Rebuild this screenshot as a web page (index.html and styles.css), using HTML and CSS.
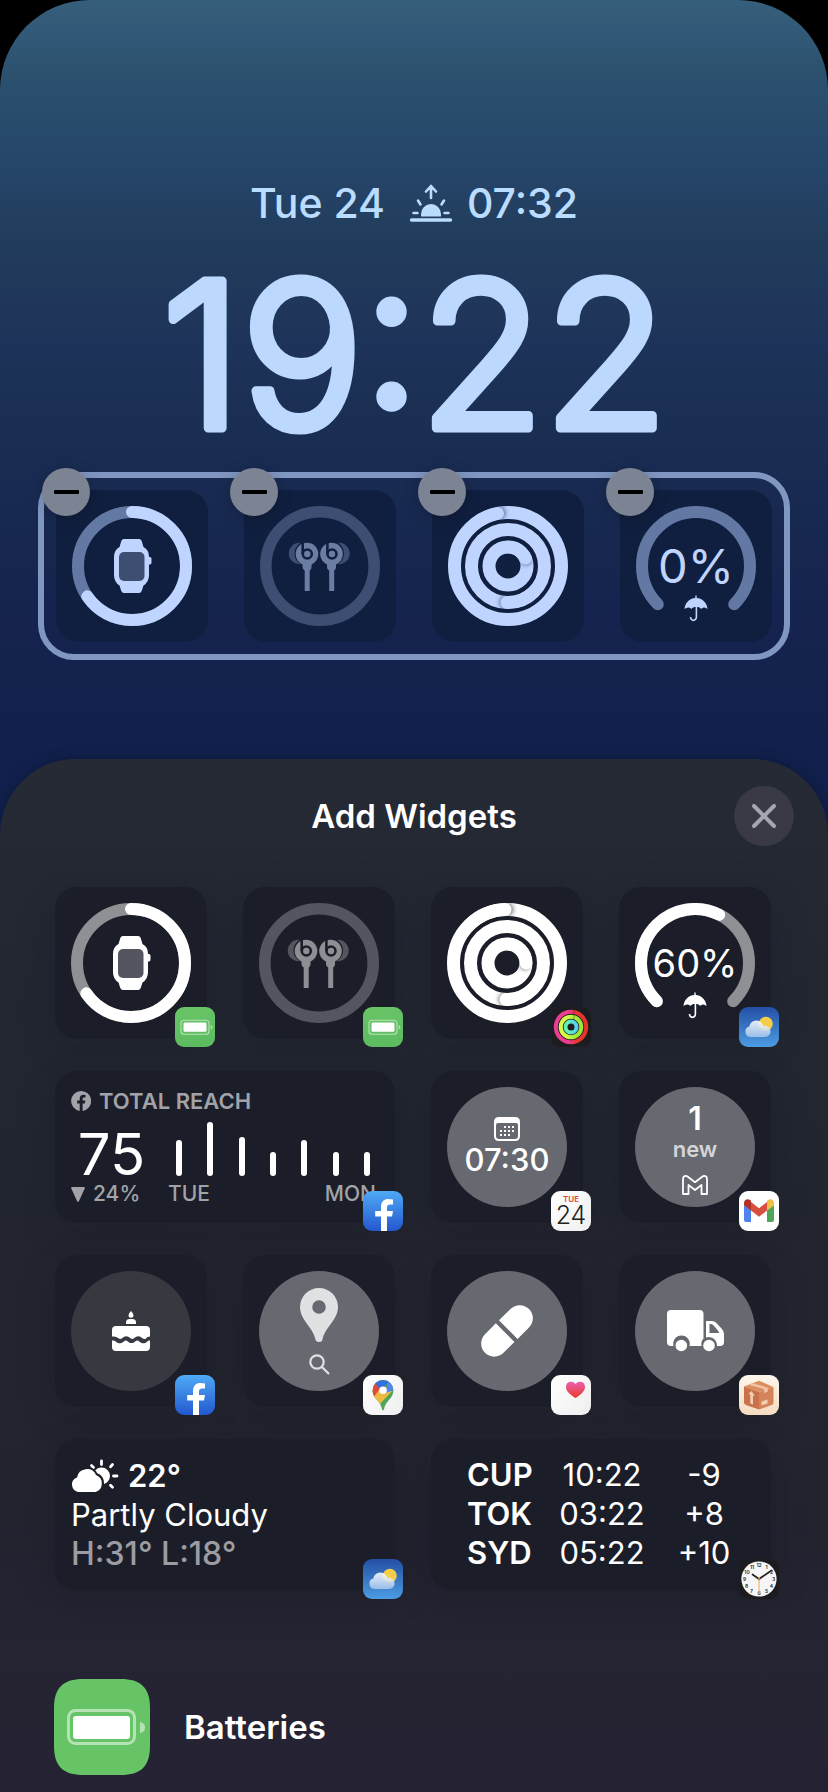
FILE: index.html
```html
<!DOCTYPE html>
<html lang="en">
<head>
<meta charset="utf-8">
<meta name="viewport" content="width=device-width, initial-scale=1">
<title>Add Widgets</title>
<link rel="stylesheet" href="styles.css">
</head>
<body>
<svg class="defs" aria-hidden="true">
  <defs>
    <linearGradient id="g-green" x1="0" y1="0" x2="0" y2="1"><stop offset="0" stop-color="#68c567"/><stop offset="1" stop-color="#5dbb60"/></linearGradient>
    <linearGradient id="g-sky" x1="0" y1="0" x2="0" y2="1"><stop offset="0" stop-color="#2450a6"/><stop offset="1" stop-color="#4c9ce2"/></linearGradient>
    <linearGradient id="g-cloud" x1="0" y1="0" x2="0" y2="1"><stop offset="0" stop-color="#ffffff"/><stop offset="1" stop-color="#a5c6ec"/></linearGradient>
    <linearGradient id="g-fb" x1="0" y1="0" x2="0" y2="1"><stop offset="0" stop-color="#4faaf6"/><stop offset="1" stop-color="#2458cf"/></linearGradient>
    <linearGradient id="g-heart" x1="0" y1="0" x2="0" y2="1"><stop offset="0" stop-color="#ea5fae"/><stop offset="1" stop-color="#ea3a27"/></linearGradient>
    <linearGradient id="g-box" x1="0" y1="0" x2="0" y2="1"><stop offset="0" stop-color="#fdf6ec"/><stop offset="1" stop-color="#f5dcc0"/></linearGradient>
    <linearGradient id="g-white" x1="0" y1="0" x2="1" y2="1"><stop offset="0" stop-color="#ffffff"/><stop offset="1" stop-color="#efefef"/></linearGradient>
    <linearGradient id="g-move" x1="0" y1="0" x2="1" y2="0"><stop offset="0.4" stop-color="#ec3d93"/><stop offset="0.7" stop-color="#e8342f"/></linearGradient>
    <linearGradient id="g-exercise" x1="0" y1="0" x2="1" y2="0"><stop offset="0.3" stop-color="#d6f94a"/><stop offset="0.8" stop-color="#9be934"/></linearGradient>
    <linearGradient id="g-stand" x1="0" y1="0" x2="1" y2="0"><stop offset="0.3" stop-color="#62f0b4"/><stop offset="0.8" stop-color="#5cd3ee"/></linearGradient>
    <filter id="soft" x="-1" y="-1" width="3" height="3"><feGaussianBlur stdDeviation="2"/></filter>
    <mask id="m-rings" maskUnits="userSpaceOnUse" x="0" y="0" width="120" height="120">
      <g fill="none" stroke="#fff" stroke-width="13"><circle cx="60" cy="60" r="53.5"/><circle cx="60" cy="60" r="36.5"/><circle cx="60" cy="60" r="19"/></g>
    </mask>
    <mask id="m-buds" maskUnits="userSpaceOnUse" x="0" y="0" width="120" height="120">
      <path fill="#fff" d="M0 0h120v120H0z"/><circle cx="47" cy="47.5" r="12.5"/><circle cx="71.5" cy="47.5" r="12.5"/>
    </mask>
    <mask id="m-b" maskUnits="userSpaceOnUse" x="0" y="0" width="120" height="120">
      <path fill="#fff" d="M0 0h120v120H0z"/>
      <g fill="none" stroke="#000" stroke-width="2.6"><circle cx="47.3" cy="48" r="4.5"/><circle cx="72" cy="48" r="4.5"/><path d="M42.7 35v13M67.4 35v13"/></g>
    </mask>
    <mask id="m-sun" maskUnits="userSpaceOnUse" x="0" y="0" width="48" height="34">
      <path fill="#fff" d="M0 0h48v34H0z"/>
      <path stroke="#000" stroke-width="4" d="M8 33a7.5 7.5 0 0 1-2-15 10 10 0 0 1 19-2 9 9 0 0 1 0 17z"/>
    </mask>
    <clipPath id="c-pin"><path d="M20 4.9a10.3 10.3 0 0 0-10.4 10.3c0 8.8 8.2 10.5 9.3 18.8q.2 1.2 1.1 1.2t1.1-1.2c1.1-8.3 9.3-10 9.3-18.8A10.3 10.3 0 0 0 20 4.9z"/></clipPath>
  </defs>

  <symbol id="watch" viewBox="0 0 120 120">
    <g fill="none" stroke-width="12">
      <circle cx="60" cy="60" r="54" stroke="var(--mid)"/>
      <circle cx="60" cy="60" r="54" stroke="var(--fg)" stroke-linecap="round" pathLength="100" stroke-dasharray="65.5 100" transform="rotate(-90 60 60)"/>
    </g>
    <path fill="var(--fg)" d="M52 33h15q2 0 2.7 2l1.8 6q5.5 3 5.5 9.5v.5h1q1.5 0 1.5 2v3.5q0 2-1.5 2h-1V69q0 7-5.5 10.5l-1.8 5.5q-.7 2-2.7 2H52q-2 0-2.7-2L47.500 79.500Q42 76 42 69V51q0-7 5.500-10l1.800-6q.7-2 2.700-2z"/>
    <rect x="47" y="46" width="25.5" height="29" rx="5" fill="var(--dim)"/>
  </symbol>
  <symbol id="buds" viewBox="0 0 120 120">
    <circle cx="60" cy="60" r="54.2" fill="none" stroke="var(--dim)" stroke-width="11.6"/>
    <g fill="var(--dim)" mask="url(#m-buds)"><circle cx="39.5" cy="47.5" r="10.7"/><circle cx="79" cy="47.5" r="10.7"/></g>
    <g fill="var(--bud)" mask="url(#m-b)"><circle cx="47" cy="48" r="11.3"/><circle cx="71.5" cy="48" r="11.3"/><path d="M42.500 56h9v5q0 3-1.800 3.500V85h-5V64.500q-2.200-.5-2.200-3.500zM67 56h9v5q0 3-1.800 3.500V85h-5V64.500Q67 64 67 61z"/></g>
  </symbol>
  <symbol id="rings-a" viewBox="0 0 120 120">
    <g fill="none" stroke="var(--fg)" stroke-width="13"><circle cx="60" cy="60" r="53.5"/><circle cx="60" cy="60" r="36.5"/><circle cx="60" cy="60" r="19"/></g>
    <g mask="url(#m-rings)">
      <g fill="var(--shade)" filter="url(#soft)"><circle cx="51" cy="7" r="6.5"/><circle cx="58" cy="96.5" r="6.5"/><circle cx="78" cy="53.5" r="5.5"/></g>
      <g fill="none" stroke="var(--fg)" stroke-width="13" stroke-linecap="round"><path d="M22.200 22.200A53.500 53.500 0 0 1 49.500 7.500M85.800 85.800A36.500 36.500 0 0 1 59 96.500M60 41A19 19 0 0 1 77.500 52"/></g>
    </g>
  </symbol>
  <symbol id="rings-b" viewBox="0 0 120 120">
    <g fill="none" stroke="var(--fg)" stroke-width="13"><circle cx="60" cy="60" r="53.5"/><circle cx="60" cy="60" r="36.5"/><circle cx="60" cy="60" r="19"/></g>
    <g mask="url(#m-rings)">
      <g fill="var(--shade)" filter="url(#soft)"><circle cx="60" cy="6.5" r="6.5"/><circle cx="58" cy="96.5" r="6.5"/><circle cx="78" cy="61" r="5.5"/></g>
      <g fill="none" stroke="var(--fg)" stroke-width="13" stroke-linecap="round"><path d="M22.200 22.200A53.500 53.500 0 0 1 58 6.500M85.800 85.800A36.500 36.500 0 0 1 59 96.500M60 41A19 19 0 0 1 79 60"/></g>
    </g>
  </symbol>
  <symbol id="gauge" viewBox="0 0 120 120">
    <g fill="none" stroke-width="12">
      <path stroke="var(--mid)" stroke-linecap="round" d="M21.800 98.200a54 54 0 1 1 76.400 0"/>
      <path class="gauge-fill" stroke="var(--fg)" d="M21.800 98.200a54 54 0 1 1 76.400 0"/>
    </g>
    <path fill="var(--fg)" d="M59.300 89.500h1.400V92c6 .4 10.300 5 10.800 11-2-2-4.500-2-6.300 0-1.300-1.500-2.500-2-4-2v10c0 5.500-7.500 5.500-7.500 0h1.600c0 3.300 4.300 3.300 4.300 0v-10c-1.700 0-2.900.5-4.200 2-1.800-2-4.500-2-6.900 0 .5-6 4.800-10.600 10.800-11z"/>
  </symbol>

  <symbol id="app-battery" viewBox="0 0 40 40">
    <rect width="40" height="40" rx="9" fill="url(#g-green)"/>
    <rect x="6" y="13.2" width="28" height="14" rx="3" fill="none" stroke="#b9e3b9" stroke-width="1.1"/>
    <rect x="8.5" y="15.6" width="23" height="9.2" rx="1.3" fill="#fff"/>
    <path fill="#b9e3b9" d="M35.800 18q1.500.6 1.500 2.200t-1.500 2.200z"/>
  </symbol>
  <symbol id="app-activity" viewBox="0 0 40 40">
    <rect width="40" height="40" rx="9" fill="#1d1d1f"/>
    <g fill="none" stroke-width="4"><circle cx="20" cy="20" r="15.2" stroke="url(#g-move)"/><circle cx="20" cy="20" r="10.3" stroke="url(#g-exercise)"/><circle cx="20" cy="20" r="5.5" stroke="url(#g-stand)"/></g>
    <path fill="none" stroke="#000" stroke-opacity=".35" d="M22.500 3q1.500 2 .4 3.600M22.500 8q1.500 2 0 3.800"/>
  </symbol>
  <symbol id="app-weather" viewBox="0 0 40 40">
    <rect width="40" height="40" rx="9" fill="url(#g-sky)"/>
    <circle cx="26.8" cy="16.8" r="7" fill="#f6cd4b"/>
    <path fill="url(#g-cloud)" fill-opacity=".88" d="M11.500 30a5.300 5.300 0 0 1-1.200-10.400 7.300 7.300 0 0 1 12.900-3.200q1 1.200 1.300 2.600a5.600 5.600 0 1 1 1.500 11z"/>
  </symbol>
  <symbol id="app-facebook" viewBox="0 0 40 40">
    <rect width="40" height="40" rx="9" fill="url(#g-fb)"/>
    <path fill="#fff" d="M18 40V25.500h-5.800v-5.600H18v-3.500C18 10.500 21 8 25.500 8q2.500 0 4.500.4v5.200h-2.600c-2.500 0-3.400 1.200-3.400 3.300v3h6l-1 5.600h-5V40z"/>
  </symbol>
  <symbol id="app-gmail" viewBox="0 0 40 40">
    <rect width="40" height="40" rx="9" fill="#fff"/>
    <path fill="#4f83ee" d="M5 14l7 5v12H7q-2 0-2-2z"/><path fill="#4fa659" d="M35 14l-7 5v12h5q2 0 2-2z"/>
    <path fill="#d94f3d" d="M12 11l8 6.200L28 11v8.500l-8 6.200-8-6.200z"/>
    <path fill="#b22f27" d="M5 14.300V12c0-3.200 3.300-5 6-3l1 .8v9.700z"/><path fill="#f3bf42" d="M35 14.300V12c0-3.200-3.300-5-6-3l-1 .8v9.700z"/>
  </symbol>
  <symbol id="app-maps" viewBox="0 0 40 40">
    <rect width="40" height="40" rx="9" fill="url(#g-white)"/>
    <g clip-path="url(#c-pin)">
      <path fill="#4fa55a" d="M0 0h40v40H0z"/><path fill="#f0bb42" d="M5 16l7.500-3H32L15 31 5 24z"/><path fill="#dc4c3d" d="M5 5h8l6 6-9 12-5-3z"/><path fill="#3071dc" d="M11.500 7.500L20 2l8 3-10 10z"/><path fill="#4f86ec" d="M26 5.500l7 4v5L22 18z"/>
    </g>
    <circle cx="20" cy="15.2" r="3.8" fill="#fff"/>
  </symbol>
  <symbol id="app-health" viewBox="0 0 40 40">
    <rect width="40" height="40" rx="9" fill="url(#g-white)"/>
    <path fill="url(#g-heart)" d="M24.500 23C20 20.300 15 16.500 15 12c0-5.500 6.500-6.800 9.500-2.800 3-4 9.500-2.700 9.500 2.800 0 4.500-5 8.300-9.500 11z"/>
  </symbol>
  <symbol id="app-parcel" viewBox="0 0 40 40">
    <rect width="40" height="40" rx="9" fill="url(#g-box)"/>
    <path fill="#db8f61" d="M20 5.700L34.500 12 20 17 5 11.500z"/><path fill="#c9714b" d="M5 11.500L20 17v17.500L7 30q-2-.8-2-2.800z"/><path fill="#d4835a" d="M20 17l14.500-5v15.500q0 2-1.700 2.500L20 34.500z"/>
    <path fill="#f0c4a2" d="M14 8.300l-4 1.600L25 14v4l3.800-1.300V12.700z"/>
    <path fill="#f2ceb2" d="M12.600 16l3.400 5-2-.6V29.500l-2.700-1V19.600l-2-.7zM22.500 26.500l6-2v4l-6 2z"/>
  </symbol>
</svg>

<main class="screen">
  <header class="lock">
    <div class="date">
      <span>Tue 24</span>
      <svg class="sunrise" viewBox="0 0 44 38" aria-hidden="true">
        <path d="M12 32.500v-2.500a10 10 0 0 1 20 0v2.500z" fill="currentColor"/>
        <g fill="none" stroke="currentColor" stroke-linecap="round" stroke-linejoin="round"><path stroke-width="2.6" d="M22 14V3M17 7.500L22 2l5 5.500M9 16.500l2.500 4M35 16.500l-2.500 4M4.500 29h4M35.500 29h4"/><path stroke-width="3.4" d="M2.500 36h39"/></g>
      </svg>
      <span>07:32</span>
    </div>
    <svg class="time" viewBox="0 0 560 190" role="img" aria-label="19:22"><text x="281" y="168" text-anchor="middle">19:22</text></svg>

    <section class="tray" aria-label="Current widgets">
      <div class="tile"><svg class="dial-face"><use href="#watch"/></svg><button class="remove" type="button" aria-label="Remove watch battery"></button></div>
      <div class="tile"><svg class="dial-face"><use href="#buds"/></svg><button class="remove" type="button" aria-label="Remove earbuds battery"></button></div>
      <div class="tile"><svg class="dial-face"><use href="#rings-a"/></svg><button class="remove" type="button" aria-label="Remove activity rings"></button></div>
      <div class="tile gauge-empty"><svg class="dial-face"><use href="#gauge"/></svg><span class="percent percent-large">0%</span><button class="remove" type="button" aria-label="Remove chance of rain"></button></div>
    </section>
  </header>

  <section class="sheet">
    <div class="sheet-head">
      <h1>Add Widgets</h1>
      <button class="close" type="button" aria-label="Close"><svg viewBox="0 0 24 24"><path d="M2 2l20 20M22 2L2 22" fill="none" stroke="currentColor" stroke-width="4" stroke-linecap="round"/></svg></button>
    </div>

    <div class="widgets">
      <div class="tile"><svg class="dial-face"><use href="#watch"/></svg><svg class="badge"><use href="#app-battery"/></svg></div>
      <div class="tile"><svg class="dial-face"><use href="#buds"/></svg><svg class="badge"><use href="#app-battery"/></svg></div>
      <div class="tile"><svg class="dial-face"><use href="#rings-b"/></svg><svg class="badge"><use href="#app-activity"/></svg></div>
      <div class="tile"><svg class="dial-face"><use href="#gauge"/></svg><span class="percent">60%</span><svg class="badge"><use href="#app-weather"/></svg></div>

      <div class="tile wide reach">
        <div class="reach-head">
          <svg viewBox="0 0 20 20" aria-hidden="true"><path fill="currentColor" d="M10 0a10 10 0 0 0-1.300 19.900V12.500H6.200V9.600h2.500V7.800c0-2.700 1.500-4 3.800-4q1.200 0 2 .2v2.500h-1.200c-1.300 0-1.700.6-1.700 1.700v1.400h2.800l-.5 2.900h-2.300v7.400A10 10 0 0 0 10 0z"/></svg>
          <span>TOTAL REACH</span>
        </div>
        <div class="reach-value">75</div>
        <div class="bars"><i style="height:36px"></i><i style="height:54px"></i><i style="height:39px"></i><i style="height:24px"></i><i style="height:36px"></i><i style="height:24px"></i><i style="height:24px"></i></div>
        <div class="change"><svg viewBox="0 0 14 15" aria-hidden="true"><path fill="currentColor" d="M1.200 0h11.600q1.400 0 .9 1.400L8 14q-1 1.700-2 0L.3 1.400Q-.2 0 1.200 0z"/></svg><span>24%</span></div>
        <div class="days"><span>TUE</span><span>MON</span></div>
        <svg class="badge"><use href="#app-facebook"/></svg>
      </div>
      <div class="tile">
        <div class="disc next-event">
          <svg viewBox="0 0 26 24" aria-hidden="true"><path fill="currentColor" fill-rule="evenodd" d="M5 0h16q5 0 5 5v14q0 5-5 5H5q-5 0-5-5V5q0-5 5-5zM2 8v11q0 3 3 3h16q3 0 3-3V8q0-2-2-2H4Q2 6 2 8z"/><path fill="currentColor" d="M10 9h2v2h-2zM14 9h2v2h-2zM18 9h2v2h-2zM6 13h2v2H6zM10 13h2v2h-2zM14 13h2v2h-2zM18 13h2v2h-2zM6 17h2v2H6zM10 17h2v2h-2zM14 17h2v2h-2z"/></svg>
          <span>07:30</span>
        </div>
        <div class="badge cal"><b>TUE</b><span>24</span></div>
      </div>
      <div class="tile">
        <div class="disc mail">
          <strong>1</strong><span>new</span>
          <svg viewBox="0 0 26 20" aria-hidden="true"><path fill="none" stroke="currentColor" stroke-width="1.8" stroke-linejoin="round" d="M1 4c0-3 2.800-3.800 4.800-2.300L13 7.200l7.200-5.500C22.200.2 25 1 25 4v15h-5.500v-9L13 15l-6.500-5v9H1z"/></svg>
        </div>
        <svg class="badge"><use href="#app-gmail"/></svg>
      </div>

      <div class="tile">
        <div class="disc disc-dark"><svg class="cake" viewBox="0 0 38 40" aria-hidden="true"><path fill="currentColor" d="M19 0q2.500 2.500 2.500 4.200a2.500 2.500 0 0 1-5 0Q16.500 2.500 19 0zM14 13v-1.500q0-3.500 3.500-3.500h3q3.500 0 3.500 3.500V13zM0 25.500V19q0-4 4-4h30q4 0 4 4v6.500c-2.500 0-3 1-4 1.900-1.100 1-2.500.9-3.500-.1-2.900-2.900-5.600-2.900-8.500 0-1 1-2.500 1-3.500 0-2.900-2.900-5.600-2.900-8.500 0-1 1-2.500 1-3.500 0C4 25.500 2.500 25.500 0 25.500zM0 29.500c2 0 2.500 0 4 1.200 2.800 2.300 5.500 2 8-.5 1-1 2.500-1 3.500 0 2.700 2.500 5.300 2.500 8 0 1-1 2.500-1 3.500 0 2.500 2.500 5.500 2.800 8 .5 1-.9 1.500-1.200 3-1.200V36q0 4-4 4H4q-4 0-4-4z"/></svg></div>
        <svg class="badge"><use href="#app-facebook"/></svg>
      </div>
      <div class="tile">
        <div class="disc place">
          <svg class="pin" viewBox="0 0 38 54" aria-hidden="true"><path fill="currentColor" fill-rule="evenodd" d="M19 0a19 19 0 0 1 19 19c0 13-13 20-15.500 32.500Q22 54 19 54t-3.500-2.500C13 39 0 32 0 19A19 19 0 0 1 19 0zm0 12.200a6.800 6.800 0 1 0 0 13.600 6.800 6.800 0 0 0 0-13.600z"/></svg>
          <svg class="find" viewBox="0 0 21 21" aria-hidden="true"><path fill="none" stroke="currentColor" stroke-width="2.2" d="M8 1.300a6.700 6.700 0 1 1 0 13.400A6.700 6.700 0 0 1 8 1.300zM12.700 12.700l7.300 7.300"/></svg>
        </div>
        <svg class="badge"><use href="#app-maps"/></svg>
      </div>
      <div class="tile">
        <div class="disc"><svg class="pill" viewBox="0 0 52 52" aria-hidden="true"><path fill="currentColor" d="M18 15.200l3-3L29.500 4A13 13 0 0 1 48 22.500L36.500 34zM14.800 18.300l18.600 18.600L22.500 47.800A13 13 0 0 1 4 29.300z"/></svg></div>
        <svg class="badge"><use href="#app-health"/></svg>
      </div>
      <div class="tile">
        <div class="disc"><svg class="truck" viewBox="0 0 57 42" aria-hidden="true"><path fill="currentColor" fill-rule="evenodd" d="M4 0h28.500q4 0 4 4v24.500a8.300 8.300 0 0 0-2 7.500h-12A8.300 8.300 0 1 0 6.500 36H4q-4 0-4-4V4q0-4 4-4zM39 11h6q2.500 0 4.200 1.700l5.500 6Q57 21 57 24v8q0 4-4 4h-3a8.300 8.300 0 0 0-11-8.500zm3.500 3v9H52q0-1-.8-1.900l-4.500-5.500Q45.300 14 44 14z"/><circle cx="14.3" cy="35.5" r="5.8" fill="currentColor"/><circle cx="42" cy="35.5" r="5.8" fill="currentColor"/></svg></div>
        <svg class="badge"><use href="#app-parcel"/></svg>
      </div>

      <div class="tile wide forecast">
        <p class="now"><svg viewBox="0 0 48 34" aria-hidden="true"><g mask="url(#m-sun)" fill="currentColor"><circle cx="30.5" cy="17" r="8.5"/><path fill="none" stroke="currentColor" stroke-width="2.8" stroke-linecap="round" d="M30.500 2v3.500M20.500 6.500l2 2M41.500 5.500l-2 2.300M42.500 17H46M39.500 26.200l2 2"/></g><path fill="currentColor" d="M7.500 33a7.500 7.500 0 0 1-1.500-14.500 10 10 0 0 1 19-2.500 9 9 0 0 1-.5 17z"/></svg><strong>22°</strong></p>
        <p>Partly Cloudy</p>
        <p class="range">H:31° L:18°</p>
        <svg class="badge"><use href="#app-weather"/></svg>
      </div>
      <div class="tile wide world">
        <table>
          <tr><th scope="row">CUP</th><td>10:22</td><td>-9</td></tr>
          <tr><th scope="row">TOK</th><td>03:22</td><td>+8</td></tr>
          <tr><th scope="row">SYD</th><td>05:22</td><td>+10</td></tr>
        </table>
        <svg class="badge" viewBox="0 0 40 40" aria-hidden="true">
          <rect width="40" height="40" rx="9" fill="#1c1c1e"/><circle cx="20" cy="20" r="17.6" fill="#f6f6f8"/>
          <g class="dial"><text x="20" y="7.5">12</text><text x="27.5" y="10">1</text><text x="32.5" y="15">2</text><text x="34.5" y="22">3</text><text x="32.5" y="29">4</text><text x="27.5" y="34">5</text><text x="20" y="36">6</text><text x="12.5" y="34">7</text><text x="7.5" y="29">8</text><text x="5.5" y="22">9</text><text x="8" y="15">10</text><text x="13" y="10">11</text></g>
          <path fill="none" stroke="#222" stroke-width="1.7" stroke-linecap="round" d="M20 20l-6.500-4.500M20 20l12.500-8.500"/>
          <path stroke="#e9b66c" stroke-width="1.2" d="M20 18v17"/><circle cx="20" cy="20" r="1.3" fill="#a07b48"/>
        </svg>
      </div>
    </div>

    <button class="app-row" type="button">
      <svg viewBox="0 0 96 96" aria-hidden="true"><path fill="#66c466" d="M29 0h38c19 0 29 8 29 29v38c0 21-10 29-29 29H29C10 96 0 88 0 67V29C0 8 10 0 29 0z"/><rect x="14.5" y="31.5" width="66" height="33" rx="7" fill="none" stroke="#b6e3b6" stroke-width="3"/><rect x="19" y="37" width="57" height="23" rx="3" fill="#fff"/><path fill="#b6e3b6" d="M86 43q5 1 5 5.500T86 54z"/></svg>
      <span>Batteries</span>
    </button>
  </section>
</main>
</body>
</html>
```
FILE: styles.css
```css
* { box-sizing: border-box; }

body {
  margin: 0;
  background: #000;
  color: #fff;
  font-family: Inter, "Liberation Sans", sans-serif;
}

h1, p { margin: 0; }

button {
  border: 0;
  padding: 0;
  background: none;
  color: inherit;
  font: inherit;
  cursor: pointer;
}

svg { display: block; }

.defs { position: absolute; width: 0; height: 0; }

.screen {
  display: flex;
  flex-direction: column;
  min-height: 100vh;
  border-radius: 90px 90px 0 0;
  background: linear-gradient(180deg, #365f7c 0, #2b506e 80px, #25456a 170px, #223d5c 235px, #1e3359 340px, #192c52 460px, #15234e 620px, #11204c 760px, #11204c 100%);
}

/* Lock screen preview */
.lock {
  --fg: #bfd4ff;
  --mid: #6478a4;
  --dim: #3e4e73;
  --bud: #6c7da3;
  --shade: #5a6c96;
  display: flex;
  flex-direction: column;
  padding: 176px 38px 99px;
}

.date {
  display: flex;
  justify-content: center;
  align-items: center;
  height: 54px;
  color: #b9dcff;
  font-size: 41px;
  font-weight: 500;
}

.sunrise { width: 44px; height: 38px; margin: 0 14px 0 24px; }

.time {
  width: 560px;
  max-width: 100%;
  height: 190px;
  margin: 30px auto 22px;
  overflow: visible;
}

.time text {
  font-family: Inter, Roboto, sans-serif;
  font-size: 202px;
  font-weight: 300;
  fill: #bcd8ff;
  stroke: #bcd8ff;
  stroke-width: 9px;
  stroke-linejoin: round;
}

.tray {
  display: grid;
  grid-template-columns: repeat(4, 1fr);
  gap: 36px;
  padding: 12px;
  border: 6px solid #8097c2;
  border-radius: 36px;
}

.tile {
  position: relative;
  display: grid;
  place-items: center;
  height: 152px;
  border-radius: 22px;
}

.tray .tile { background: #101f3f; }

.dial-face, .percent { grid-area: 1 / 1; }

.dial-face { width: 120px; height: 120px; }

.gauge-fill {
  stroke-dasharray: 152 300;
  stroke-linecap: round;
  stroke-opacity: var(--fill-opacity, 1);
}

.gauge-empty { --fill-opacity: 0; }

.percent {
  color: var(--fg);
  font-size: 38px;
  line-height: 48px;
}

.percent-large { font-size: 47px; }

.remove {
  position: absolute;
  top: -22px;
  left: -14px;
  display: grid;
  place-items: center;
  width: 48px;
  height: 48px;
  border-radius: 50%;
  background: #7c8494;
  box-shadow: 0 2px 16px rgba(0, 0, 0, 0.2);
}

.remove::before {
  content: "";
  width: 25px;
  height: 4px;
  border-radius: 1px;
  background: #000;
}

/* Widget picker */
.sheet {
  --fg: #fff;
  --mid: #8f9094;
  --dim: #54565f;
  --bud: #8e8f94;
  --shade: #777;
  flex: 1;
  padding: 27px 0 17px;
  border-radius: 76px 76px 0 0;
  background: linear-gradient(180deg, #262a34 0, #232732 200px, #22252f 500px, #22232f 760px, #252433 900px, #252333 100%);
  box-shadow: 0 0 16px rgba(0, 0, 0, 0.2);
}

.sheet-head {
  display: grid;
  grid-template-columns: 60px 1fr 60px;
  align-items: center;
  padding: 0 34px;
}

.sheet-head h1 {
  grid-column: 2;
  font-size: 33px;
  font-weight: 600;
  line-height: 48px;
  text-align: center;
}

.close {
  display: grid;
  place-items: center;
  width: 60px;
  height: 60px;
  border-radius: 50%;
  background: #393a45;
  color: #a5a5b0;
}

.close svg { width: 24px; height: 24px; }

.widgets {
  display: grid;
  grid-template-columns: repeat(4, 1fr);
  gap: 32px 36px;
  padding: 41px 57px 0 55px;
}

.widgets .tile {
  background: #1b1e28;
  box-shadow: 0 10px 40px rgba(10, 12, 20, 0.16);
}

.widgets .wide { grid-column: span 2; }

.badge {
  position: absolute;
  right: -8px;
  bottom: -8px;
  width: 40px;
  height: 40px;
}

.reach {
  grid-template-columns: 81px 1fr;
  grid-template-rows: 24px 63px 24px;
  column-gap: 16px;
  align-content: start;
  align-items: end;
  justify-items: stretch;
  padding: 18px 19px 0 16px;
  color: #a2a3a8;
  font-size: 21px;
  font-weight: 500;
  line-height: 24px;
}

.reach-head {
  grid-column: span 2;
  display: flex;
  align-items: center;
  gap: 8px;
  font-size: 22px;
  font-weight: 600;
}

.reach-head svg { width: 20px; height: 20px; }

.reach-value {
  color: #fff;
  font-size: 58px;
  font-weight: 400;
  line-height: 44px;
  text-align: center;
}

.bars {
  display: flex;
  justify-content: space-between;
  align-items: end;
  padding: 0 6px 0 8px;
}

.bars i { width: 6px; border-radius: 3px; background: #fff; }

.change, .days { padding-top: 6px; height: 30px; align-self: start; }

.change { display: flex; align-items: center; gap: 8px; }

.change svg { width: 14px; height: 15px; }

.days { display: flex; justify-content: space-between; }

.disc {
  display: flex;
  flex-direction: column;
  align-items: center;
  justify-content: center;
  width: 120px;
  height: 120px;
  border-radius: 50%;
  background: #676970;
}

.disc-dark { background: #373941; }

.next-event {
  justify-content: start;
  padding-top: 30px;
  font-size: 31px;
  font-weight: 500;
  line-height: 38px;
}

.next-event svg { width: 26px; height: 24px; }

.mail { justify-content: start; padding-top: 16px; }
.mail strong { font-size: 32px; font-weight: 600; line-height: 32px; }
.mail span { color: #d4d5d7; font-size: 22px; font-weight: 600; line-height: 28px; }
.mail svg { width: 26px; height: 20px; margin-top: 12px; }

.cal {
  display: flex;
  flex-direction: column;
  align-items: center;
  padding-top: 4px;
  border-radius: 9px;
  background: linear-gradient(135deg, #fff, #f0f0f0);
  color: #222;
}

.cal b { color: #e5423a; font-size: 8px; font-weight: 600; line-height: 8px; }
.cal span { font-size: 25px; font-weight: 300; line-height: 24px; }

.cake { width: 38px; height: 40px; }

.place {
  justify-content: start;
  gap: 12px;
  padding-top: 17px;
  color: #e0e1e3;
}

.pin { width: 38px; height: 54px; }
.find { width: 21px; height: 21px; }
.pill { width: 52px; height: 52px; }
.truck { width: 57px; height: 42px; }

.forecast {
  align-content: start;
  justify-items: start;
  padding: 17px 16px 0;
  font-size: 31px;
  line-height: 39px;
}

.now { display: flex; align-items: center; gap: 9px; }
.now svg { width: 48px; height: 34px; }
.now strong { font-weight: 600; }
.range { color: #9c9ca2; font-size: 32px; font-weight: 500; }

.world {
  align-content: start;
  justify-items: start;
  padding: 16px 16px 0 36px;
}

.world table {
  border-collapse: collapse;
  font-size: 31px;
  line-height: 39px;
}

.world th, .world td { padding: 0; }
.world th { width: 84px; font-weight: 600; text-align: left; }
.world td { width: 102px; text-align: center; }

.dial text {
  fill: #222;
  font-size: 5px;
  font-weight: 600;
  text-anchor: middle;
}

.app-row {
  display: flex;
  align-items: center;
  gap: 34px;
  margin: 88px 0 0 54px;
  font-size: 33px;
  font-weight: 600;
}

.app-row svg { width: 96px; height: 96px; }
```
